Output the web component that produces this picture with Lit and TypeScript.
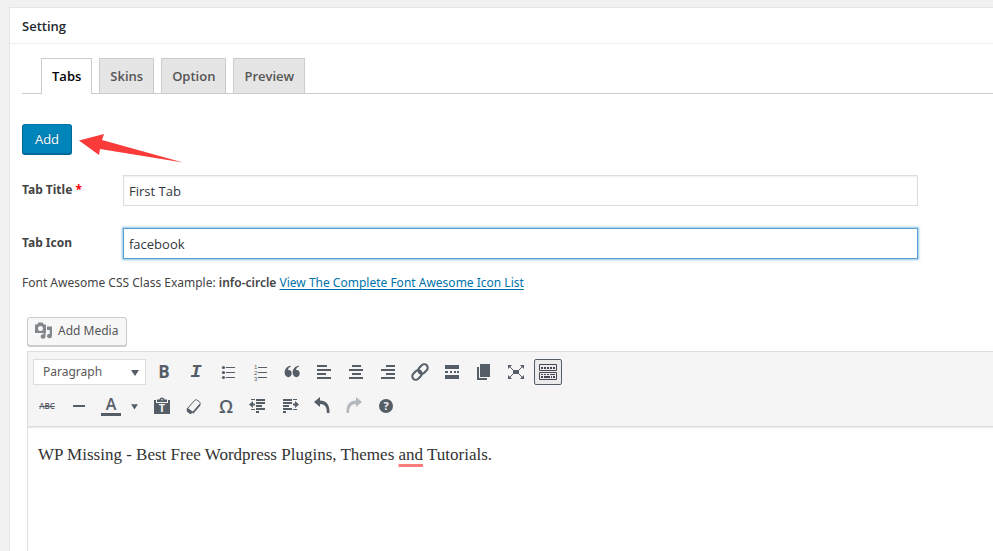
import { LitElement, html, css, svg } from "lit";
import { customElement, state } from "lit/decorators.js";
import { classMap } from "lit/directives/class-map.js";

const bars = (rows: number[][]) =>
  rows.map(([x, y, w, h]) => svg`<rect x=${x} y=${y} width=${w} height=${h} />`);

const indentLines = (x: number, other: number) =>
  bars([[other, 3, 4, 1], [x, 3, 9, 2], [x, 6, 9, 2], [x, 9, 6, 2], [x, 12, 9, 2], [other, 13, 4, 1], [x, 15, 3, 2]]);

const icons = {
  bullist: svg`<circle cx="5.500" cy="5.500" r="1.600" /><circle cx="5.500" cy="10.500" r="1.600" /><circle cx="5.500" cy="15.500" r="1.600" />${bars([[8, 5, 9, 1], [8, 10, 9, 1], [8, 15, 9, 1]])}`,
  numlist: svg`${bars([[8, 5, 9, 1], [8, 10, 9, 1], [8, 15, 9, 1]])}
    <text class="digit" x="4" y="7">1</text><text class="digit" x="4" y="13">2</text><text class="digit" x="4" y="19">3</text>`,
  quote: svg`<path d="M9 4.500C6.800 5.200 6 6.800 6.100 8.200C6.300 8.100 6.700 8.100 7 8.100C8.600 8.100 9.700 9.400 9.700 11.300C9.700 13.500 8.400 15.200 6.500 15.200C4.200 15.200 2.600 13.200 2.600 10.500C2.600 7 5.200 4.200 8.700 3.800Z M17 4.500C14.800 5.200 14 6.800 14.100 8.200C14.300 8.100 14.700 8.100 15 8.100C16.600 8.100 17.700 9.400 17.700 11.300C17.700 13.500 16.400 15.200 14.500 15.200C12.200 15.200 10.600 13.200 10.600 10.500C10.600 7 13.200 4.200 16.700 3.800Z" />`,
  left: bars([[3, 3, 10, 2], [3, 7, 14, 2], [3, 11, 9, 2], [3, 15, 14, 2]]),
  center: bars([[6, 3, 9, 2], [3, 7, 14, 2], [6, 11, 9, 2], [3, 15, 14, 2]]),
  right: bars([[8, 3, 9, 2], [3, 7, 14, 2], [8, 11, 9, 2], [3, 15, 14, 2]]),
  link: svg`<g class="line" transform="rotate(-45 10 10)"><rect x="0.500" y="6.500" width="10.500" height="7" rx="3.500" /><rect x="9" y="6.500" width="10.500" height="7" rx="3.500" /></g>`,
  more: bars([[3, 3, 14, 4], [3, 9, 3, 2], [8, 9, 2, 2], [12, 9, 2, 2], [15, 9, 2, 2], [3, 13, 14, 4]]),
  copy: svg`<path d="M6 2H16V15H6Z M3 5H5V16H13V18H3Z" />`,
  full: svg`<path d="M7 8H13V12H7Z M2 3H6L2 7Z M18 3V7L14 3Z M2 17V13L6 17Z M18 17H14L18 13Z" /><path class="hair" d="M3 4L8 9M17 4L12 9M3 16L8 11M17 16L12 11" />`,
  keyboard: svg`<path class="hair" d="M1.500 2.500H18.500V8.500H1.500Z M1.500 10.500H18.500V17.500H1.500Z" />
    ${bars([[3, 5, 2, 2], [6, 5, 2, 2], [9, 5, 2, 2], [12, 5, 2, 2], [15, 5, 2, 2], [3, 12, 2, 1], [6, 12, 2, 1], [9, 12, 2, 1], [12, 12, 5, 1], [3, 14, 2, 2], [6, 14, 6, 2], [13, 14, 1, 2], [15, 14, 2, 2]])}`,
  rule: bars([[4, 9, 12, 2]]),
  paste: svg`<path fill-rule="evenodd" d="M2 4H4V7H16V4H18V18H2Z M5 3.500H7.500C7.800 2.300 8.800 1.500 10 1.500S12.200 2.300 12.500 3.500H15V6H5Z M9.200 3.800A.8.8 0 1 0 10.800 3.800A.8.8 0 1 0 9.200 3.800Z" /><text class="mark" x="10" y="16">T</text>`,
  eraser: svg`<path class="thin" d="M3.500 12.500L10.800 4.300C11.500 3.600 12.300 3.500 13 4L15.700 6.200C16.400 6.800 16.400 7.500 15.800 8.200L8.700 16.200Z" /><path d="M3 11.800L9.200 16L7.500 17.600C6.900 18.200 6.200 18.200 5.600 17.700L3.200 15.700C2.600 15.100 2.600 14.500 2.700 13.900Z M8.700 16.200L16.400 7.500V9.500L9 18Z" />`,
  outdent: svg`<path d="M1 8.500L5 5V7.500H7V9.500H5V12Z" />${indentLines(8, 3)}`,
  indent: svg`<path d="M19 8.500L15 5V7.500H13V9.500H15V12Z" />${indentLines(3, 13)}`,
  undo: svg`<path d="M2 6L8 1V4.500C14 4.500 18 8.500 17.500 17H14.800C15.300 11 12.500 8 8 8V11Z" />`,
  redo: svg`<path d="M18 6L12 1V4.500C6 4.500 2 8.500 2.500 17H5.200C4.700 11 7.500 8 12 8V11Z" />`,
  help: svg`<circle cx="10" cy="10" r="7" /><text class="mark" x="10" y="14">?</text>`,
};

type Tool = { label: string; icon?: unknown; text?: string; cls?: string };

const firstRow: Tool[] = [
  { label: "Bold", text: "B", cls: "bold" },
  { label: "Italic", text: "I", cls: "italic" },
  { label: "Bulleted list", icon: icons.bullist },
  { label: "Numbered list", icon: icons.numlist },
  { label: "Blockquote", icon: icons.quote },
  { label: "Align left", icon: icons.left },
  { label: "Align center", icon: icons.center },
  { label: "Align right", icon: icons.right },
  { label: "Insert link", icon: icons.link },
  { label: "Insert Read More tag", icon: icons.more },
  { label: "Page break", icon: icons.copy },
  { label: "Fullscreen", icon: icons.full },
  { label: "Toolbar Toggle", icon: icons.keyboard, cls: "active" },
];

const secondRow: Tool[] = [
  { label: "Paste as text", icon: icons.paste },
  { label: "Clear formatting", icon: icons.eraser },
  { label: "Special character", text: "Ω", cls: "omega" },
  { label: "Decrease indent", icon: icons.outdent },
  { label: "Increase indent", icon: icons.indent },
  { label: "Undo", icon: icons.undo },
  { label: "Redo", icon: icons.redo, cls: "faded" },
  { label: "Keyboard Shortcuts", icon: icons.help },
];

@customElement("editor-box")
export class EditorBox extends LitElement {
  static styles = css`
    :host { display: block; }
    button, select { font: inherit; color: inherit; margin: 0; }
    .media {
      display: flex; align-items: center; gap: 4px; height: 29px; padding: 0 8px 1px 6px;
      border: 1px solid #ccc; border-radius: 3px; background: #f7f7f7; color: #555;
      box-shadow: 0 1px 0 #ccc; font: 12px/20px "Noto Sans", sans-serif;
    }
    svg { display: block; width: 20px; height: 20px; fill: currentColor; }
    .media svg { color: #82878c; }
    .frame { margin-top: 5px; border: 1px solid #dedede; border-width: 1px 0 0 1px; min-height: 240px; }
    .toolbar {
      display: flex; flex-direction: column; gap: 8px; padding: 7px 5px; background: #f5f5f5;
      border-bottom: 1px solid #ddd; box-shadow: 0 1px 1px rgba(0, 0, 0, 0.08); color: #555d66;
    }
    .row { display: flex; gap: 4px; }
    .pick { display: flex; position: relative; width: 113px; }
    .pick select {
      width: 100%; height: 26px; appearance: none; border: 1px solid #ddd; border-radius: 0;
      background: #fff; padding: 0 9px; color: #595959; font: 12px/20px "Noto Sans", sans-serif;
    }
    .pick svg { position: absolute; right: 1px; top: 3px; pointer-events: none; }
    .tool {
      display: flex; align-items: center; justify-content: center; width: 28px; height: 26px;
      padding: 0; border: 1px solid transparent; border-radius: 2px; background: none; line-height: 20px;
    }
    .active { border-color: #555d66; background: #ebebeb; color: #4a4656; }
    .faded { color: #b4b9be; }
    .bold { font-size: 17px; font-weight: 700; }
    .italic { font: italic bold 19px/20px "Liberation Mono", monospace; }
    .omega { font-size: 18px; font-weight: 600; }
    .strike { font-size: 8px; font-weight: 600; text-decoration: line-through; }
    .split { display: flex; width: 47px; }
    .colour { font-size: 16px; font-weight: 600; }
    .colour span { border-bottom: 3px solid currentColor; width: 20px; line-height: 17px; }
    .arrow { width: 19px; }
    .line { fill: none; stroke: currentColor; stroke-width: 2; }
    .thin, .hair { fill: none; stroke: currentColor; stroke-width: 1; }
    .digit { font: 6px "Liberation Sans", sans-serif; }
    .mark { font: bold 11px "Open Sans", sans-serif; fill: #f5f5f5; text-anchor: middle; }
    .body { margin: 0; padding: 14px 10px; font: 17px/28px "Liberation Serif", serif; color: #333; }
    .flag { text-decoration: underline 3px #ff7d7d; text-underline-offset: 4px; text-decoration-skip-ink: none; }
  `;

  private tool(t: Tool) {
    return html`<button type="button" class="tool ${t.cls ?? ""}" aria-label=${t.label}>${t.icon ? html`<svg viewBox="0 0 20 20">${t.icon}</svg>` : t.text}</button>`;
  }

  render() {
    const down = html`<svg viewBox="0 0 20 20"><path d="M6 8H14L10 14Z" /></svg>`;
    return html`
      <button type="button" class="media">
        <svg viewBox="0 0 20 20"><path fill-rule="evenodd" d="M1 3.500H3L4.500 1.500H8.500L10 3.500H12V12H1Z M4 7.500A2.500 2.500 0 1 0 9 7.500A2.500 2.500 0 1 0 4 7.500Z" /><path d="M13 5.500H18V15A2.500 2.200 0 1 1 15.800 12.800V9H13V5.500Z M9.500 12H11.500V15.500A2.400 2.200 0 1 1 9.500 13.300Z" /></svg>
        Add Media
      </button>
      <div class="frame">
        <div class="toolbar" role="toolbar" aria-label="Formatting">
          <div class="row">
            <div class="pick">
              <select aria-label="Format"><option>Paragraph</option><option>Heading 1</option></select>
              ${down}
            </div>
            ${firstRow.map((t) => this.tool(t))}
          </div>
          <div class="row">
            <button type="button" class="tool strike" aria-label="Strikethrough">ABC</button>
            ${this.tool({ label: "Horizontal line", icon: icons.rule })}
            <div class="split">
              <button type="button" class="tool colour" aria-label="Text color"><span>A</span></button>
              <button type="button" class="tool arrow" aria-label="Choose text color">${down}</button>
            </div>
            ${secondRow.map((t) => this.tool(t))}
          </div>
        </div>
        <p class="body">WP Missing - Best Free Wordpress Plugins, Themes <span class="flag">and</span> Tutorials.</p>
      </div>
    `;
  }
}

@customElement("app-root")
export class AppRoot extends LitElement {
  @state() private current = "Tabs";

  static styles = css`
    :host {
      display: block; box-sizing: border-box; height: 100vh; overflow: hidden; padding: 7px 0 0 9px;
      background: #f1f1f1; font: 13px/20px "Open Sans", "Noto Sans", sans-serif; color: #444;
    }
    * { box-sizing: border-box; }
    button, input { font: inherit; margin: 0; }
    .postbox { border: 1px solid #e5e5e5; border-width: 1px 0 0 1px; background: #fff; min-height: 100%; }
    h2 {
      margin: 0; padding: 8px 12px 7px; border-bottom: 1px solid #eee; color: #23282d;
      font-size: 13px; line-height: 20px; font-weight: 600;
    }
    .inside { padding: 14px 0 0 12px; }
    .tabs { display: flex; gap: 7px; padding-left: 19px; border-bottom: 1px solid #ccc; }
    .tab {
      height: 35px; padding: 0 10px; border: 1px solid #ccc; border-bottom: 0; background: #e5e5e5;
      color: #555; font-weight: 600; white-space: nowrap;
    }
    .chosen { height: 36px; margin-bottom: -1px; padding-bottom: 1px; background: #fff; color: #000; }
    .actions { position: relative; margin-top: 30px; }
    .add {
      display: block; width: 50px; height: 31px; padding: 0 0 2px; border: 1px solid #006799; border-top-color: #0073aa;
      border-radius: 3px; background: #0085ba; color: #fff; box-shadow: inset 0 -1px 0 #006799;
      text-shadow: 0 -1px 1px #006799;
    }
    .pointer { position: absolute; left: 56px; top: 8px; width: 106px; height: 32px; fill: #fb3a3a; }
    .field { display: flex; align-items: center; margin-top: 22px; padding-right: 75px; }
    .actions + .field { margin-top: 20px; }
    label { flex: none; width: 101px; padding-bottom: 2px; font: bold 12px/20px "Noto Sans", sans-serif; }
    .required { color: #f00; }
    input {
      flex: 1; min-width: 0; height: 31px; padding: 2px 5px; border: 1px solid #ddd; border-radius: 0;
      color: #32373c; background: #fff; box-shadow: inset 0 1px 2px rgba(0, 0, 0, 0.07); outline: 0;
    }
    .focused { border-color: #5b9dd9; box-shadow: 0 0 2px 1px rgba(30, 140, 190, 0.5); }
    .hint { margin: 14px 0 24px; font: 12px/20px "Noto Sans", sans-serif; white-space: nowrap; }
    .hint b { font-weight: 600; }
    .hint a { color: #0073aa; text-underline-offset: 2px; text-decoration-skip-ink: none; }
    editor-box { margin-left: 5px; }
  `;

  render() {
    return html`
      <section class="postbox">
        <h2>Setting</h2>
        <div class="inside">
          <nav class="tabs">
            ${["Tabs", "Skins", "Option", "Preview"].map(
              (name) => html`<button type="button" class=${classMap({ tab: true, chosen: name === this.current })}
                @click=${() => (this.current = name)}>${name}</button>`,
            )}
          </nav>
          <div class="actions">
            <button type="button" class="add">Add</button>
            <svg class="pointer" viewBox="0 0 106 32" aria-hidden="true"><path d="M1 8.500L26 2L24 8L105 30.500L22 17L21 23Z" /></svg>
          </div>
          <div class="field">
            <label for="title">Tab Title <span class="required">*</span></label>
            <input id="title" type="text" value="First Tab" />
          </div>
          <div class="field">
            <label for="icon">Tab Icon</label>
            <input id="icon" class="focused" type="text" value="facebook" />
          </div>
          <p class="hint">Font Awesome CSS Class Example: <b>info-circle</b> <a href="#icons">View The Complete Font Awesome Icon List</a></p>
          <editor-box></editor-box>
        </div>
      </section>
    `;
  }
}
